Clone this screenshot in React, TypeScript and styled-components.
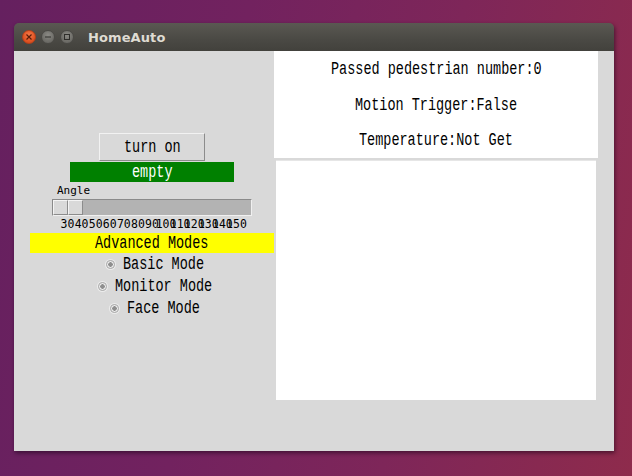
import React from "react";
import styled, { createGlobalStyle } from "styled-components";

const Global = createGlobalStyle`
  html, body { margin: 0; padding: 0; }
  body {
    width: 632px;
    height: 476px;
    overflow: hidden;
    background: linear-gradient(100deg, #65205f 0%, #72225f 35%, #7e2659 65%, #8e2b4c 100%);
  }
`;

const Desktop = styled.div`
  width: 632px;
  height: 476px;
  padding: 23px 0 0 14px;
  box-sizing: border-box;
`;

const Window = styled.div`
  width: 600px;
  height: 428px;
  display: flex;
  flex-direction: column;
  border-radius: 5px 5px 0 0;
  overflow: hidden;
  box-shadow: 1px 2px 4px rgba(20, 0, 20, 0.55);
`;

const TitleBar = styled.div`
  height: 28px;
  flex: none;
  display: flex;
  align-items: center;
  padding-left: 8px;
  background: linear-gradient(#5a5852, #4a4944 60%, #42413c);
  box-sizing: border-box;
`;

const WinButtons = styled.div`
  display: flex;
  gap: 5px;
  align-items: center;
`;

const WinBtn = styled.div<{ $close?: boolean }>`
  width: 14px;
  height: 14px;
  border-radius: 50%;
  display: flex;
  align-items: center;
  justify-content: center;
  box-sizing: border-box;
  border: 1px solid ${(p) => (p.$close ? "#b3401a" : "#4a4945")};
  background: ${(p) =>
    p.$close
      ? "radial-gradient(circle at 50% 35%, #f47a4a, #e05424 60%, #c9441a)"
      : "radial-gradient(circle at 50% 35%, #8b8a85, #6f6e69 60%, #62615c)"};
`;

const Title = styled.div`
  margin-left: 14px;
  font-family: "DejaVu Sans", sans-serif;
  font-weight: bold;
  font-size: 13px;
  color: #dfdbd2;
  letter-spacing: 0.1px;
`;

const Content = styled.div`
  flex: 1;
  display: flex;
  background: #d9d9d9;
  padding: 0 16px;
`;

const LeftPanel = styled.div`
  width: 244px;
  display: flex;
  flex-direction: column;
  align-items: center;
  padding-top: 82px;
`;

const RightPanel = styled.div`
  width: 324px;
  display: flex;
  flex-direction: column;
`;

/* Tk "fixed"-like text: tall, narrow glyphs with an 8.1px advance */
const TkTextBox = styled.span<{ $n: number }>`
  display: inline-block;
  width: ${(p) => p.$n * 8.1}px;
  height: 20px;
  line-height: 20px;
  white-space: nowrap;
  overflow: visible;
`;

const TkGlyphs = styled.span`
  display: inline-block;
  font-family: "Liberation Mono", monospace;
  font-size: 18px;
  transform: scaleX(0.75);
  transform-origin: 0 50%;
`;

const TkText = ({ children }: { children: string }) => (
  <TkTextBox $n={children.length}>
    <TkGlyphs>{children}</TkGlyphs>
  </TkTextBox>
);

const TkButton = styled.div`
  width: 106px;
  height: 28px;
  box-sizing: border-box;
  border: 1px solid;
  border-color: #f2f2f2 #8c8c8c #8c8c8c #f2f2f2;
  background: #d9d9d9;
  display: flex;
  align-items: center;
  justify-content: center;
  color: #000;
`;

const ColorLabel = styled.div<{ $bg: string; $fg: string; $w: number }>`
  width: ${(p) => p.$w}px;
  height: 20px;
  background: ${(p) => p.$bg};
  color: ${(p) => p.$fg};
  display: flex;
  align-items: center;
  justify-content: center;
`;

const Scale = styled.div`
  width: 200px;
  display: flex;
  flex-direction: column;
`;

const ScaleLabel = styled.div`
  height: 17px;
  padding-left: 5px;
  display: flex;
  align-items: center;
  font-family: "DejaVu Sans Mono", monospace;
  font-size: 11px;
  color: #000;
`;

const Trough = styled.div`
  height: 17px;
  box-sizing: border-box;
  border: 1px solid;
  border-color: #8a8a8a #f0f0f0 #f0f0f0 #8a8a8a;
  background: #b3b3b3;
  display: flex;
`;

const Handle = styled.div`
  width: 30px;
  height: 15px;
  display: flex;
`;

const HandleHalf = styled.div`
  flex: 1;
  box-sizing: border-box;
  border: 1px solid;
  border-color: #f4f4f4 #8c8c8c #8c8c8c #f4f4f4;
  background: #d9d9d9;
`;

const Ticks = styled.div`
  width: 169px;
  height: 15px;
  align-self: center;
  display: flex;
  justify-content: space-between;
  align-items: center;
`;

const Tick = styled.div`
  width: 0;
  display: flex;
  justify-content: center;
  white-space: nowrap;
  font-family: "DejaVu Sans Mono", monospace;
  font-size: 11.5px;
  color: #000;
`;

const Spacer = styled.div<{ $h: number }>`
  height: ${(p) => p.$h}px;
  flex: none;
`;

const RadioRow = styled.div`
  height: 22px;
  margin-left: 6px;
  display: flex;
  align-items: center;
  gap: 8px;
  color: #000;
`;

const RadioDot = styled.div`
  width: 9px;
  height: 9px;
  border-radius: 50%;
  box-sizing: border-box;
  border: 1px solid #a9a9a9;
  background: radial-gradient(circle, #8e8e8e 0 2px, #ececec 2.5px 100%);
  box-shadow: 0 0 0 1px #ececec;
`;

const InfoBox = styled.div`
  height: 107px;
  background: #fff;
  display: flex;
  flex-direction: column;
`;

const InfoLine = styled.div`
  flex: 1;
  display: flex;
  align-items: center;
  justify-content: center;
  color: #000;
`;

const Canvas = styled.div`
  width: 320px;
  height: 240px;
  margin: 2px 2px 0 2px;
  box-sizing: border-box;
  border-top: 1px solid #e6e6e6;
  background: #fff;
`;

const ticks = [30, 40, 50, 60, 70, 80, 90, 100, 110, 120, 130, 140, 150];
const modes = ["Basic Mode", "Monitor Mode", "Face Mode"];
const info = ["Passed pedestrian number:0", "Motion Trigger:False", "Temperature:Not Get"];

export default function App() {
  return (
    <>
      <Global />
      <Desktop>
        <Window>
          <TitleBar>
            <WinButtons>
              <WinBtn $close>
                <svg width="8" height="8" viewBox="0 0 8 8">
                  <path d="M1.5 1.5 L6.5 6.5 M6.5 1.5 L1.5 6.5" stroke="#5a1c08" strokeWidth="1.2" />
                </svg>
              </WinBtn>
              <WinBtn>
                <svg width="8" height="8" viewBox="0 0 8 8">
                  <path d="M1 4 H7" stroke="#2f2e2b" strokeWidth="1.2" />
                </svg>
              </WinBtn>
              <WinBtn>
                <svg width="8" height="8" viewBox="0 0 8 8">
                  <rect x="1.5" y="1.5" width="5" height="5" fill="none" stroke="#2f2e2b" strokeWidth="1" />
                </svg>
              </WinBtn>
            </WinButtons>
            <Title>HomeAuto</Title>
          </TitleBar>
          <Content>
            <LeftPanel>
              <TkButton>
                <TkText>turn on</TkText>
              </TkButton>
              <Spacer $h={1} />
              <ColorLabel $bg="#008000" $fg="#ffffff" $w={164}>
                <TkText>empty</TkText>
              </ColorLabel>
              <Scale>
                <ScaleLabel>Angle</ScaleLabel>
                <Trough>
                  <Handle>
                    <HandleHalf />
                    <HandleHalf />
                  </Handle>
                </Trough>
                <Ticks>
                  {ticks.map((t) => (
                    <Tick key={t}>{t}</Tick>
                  ))}
                </Ticks>
              </Scale>
              <Spacer $h={2} />
              <ColorLabel $bg="#ffff00" $fg="#000000" $w={244}>
                <TkText>Advanced Modes</TkText>
              </ColorLabel>
              {modes.map((m) => (
                <RadioRow key={m}>
                  <RadioDot />
                  <TkText>{m}</TkText>
                </RadioRow>
              ))}
            </LeftPanel>
            <RightPanel>
              <InfoBox>
                {info.map((line) => (
                  <InfoLine key={line}>
                    <TkText>{line}</TkText>
                  </InfoLine>
                ))}
              </InfoBox>
              <Canvas />
            </RightPanel>
          </Content>
        </Window>
      </Desktop>
    </>
  );
}
